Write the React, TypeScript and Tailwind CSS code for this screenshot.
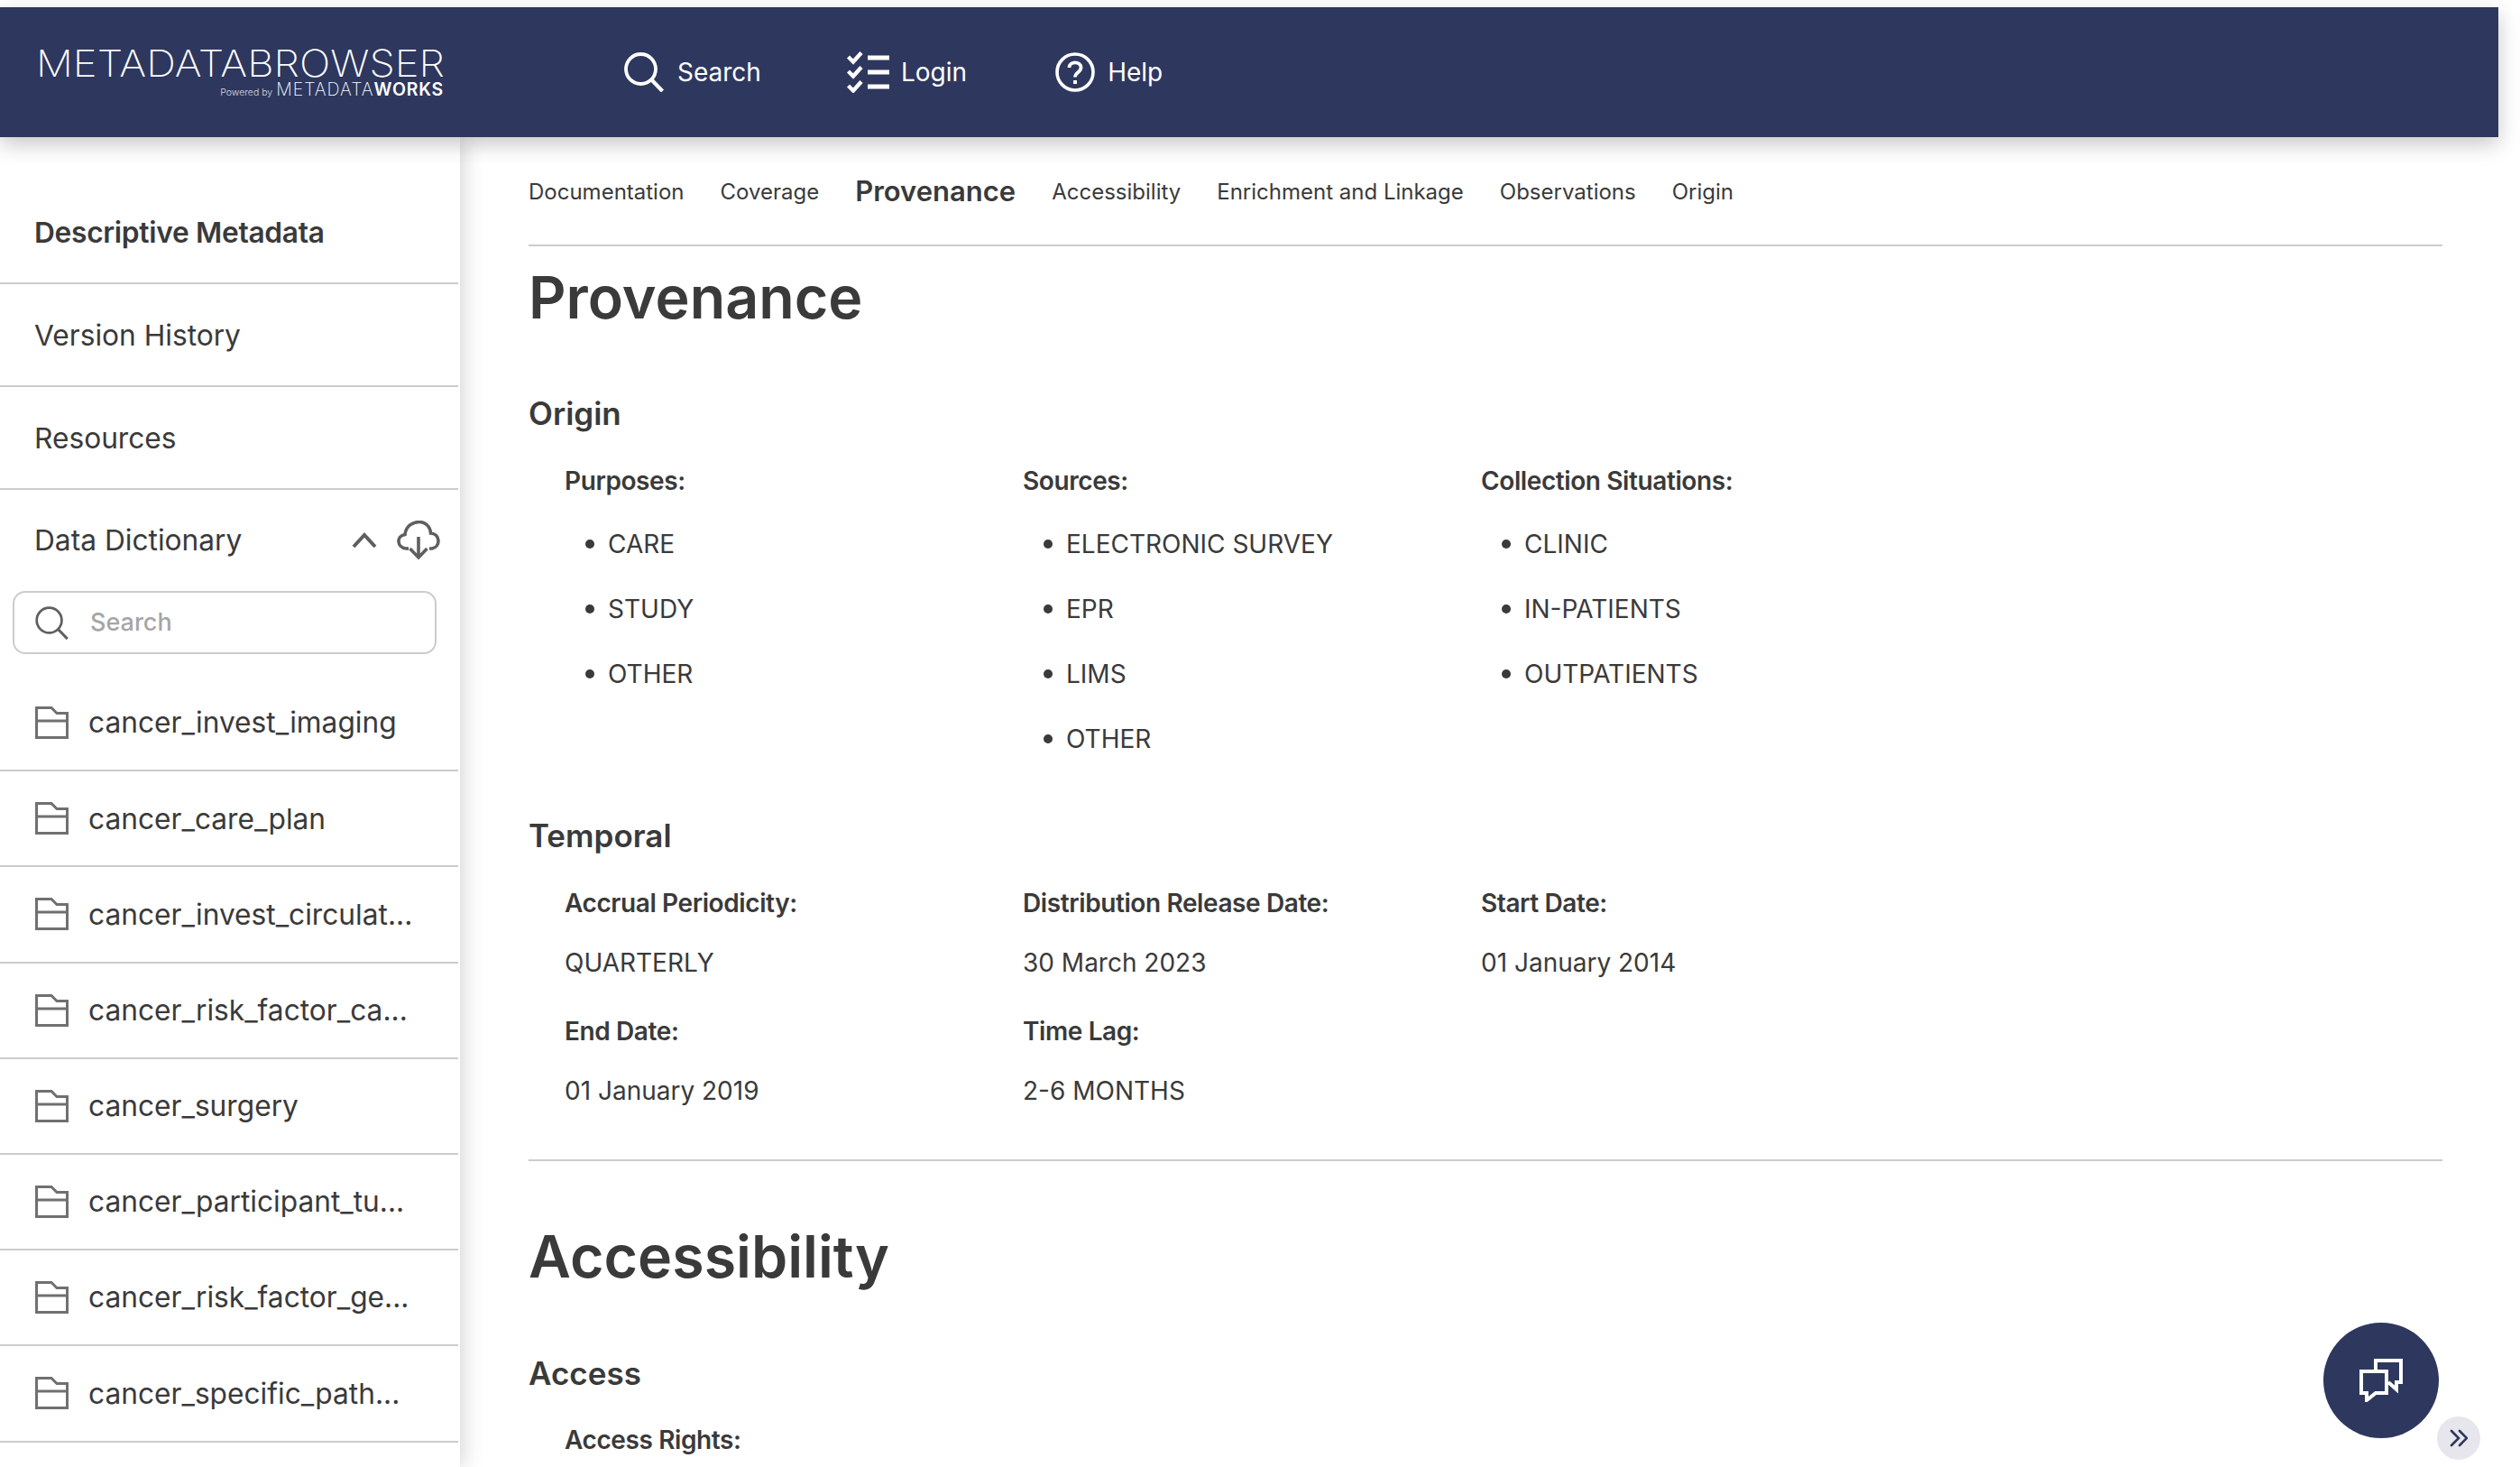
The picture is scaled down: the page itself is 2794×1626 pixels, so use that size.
import React from "react";

const FONT = "font-['Inter','Liberation_Sans',sans-serif]";

function SearchIcon({ className, sw }: { className: string; sw: number }) {
  return (
    <svg viewBox="0 0 44 44" fill="none" stroke="currentColor" strokeWidth={sw} className={className}>
      <circle cx="18.5" cy="18.5" r="16.5" />
      <path d="M30 30 L42.5 43" strokeWidth={sw + 0.4} />
    </svg>
  );
}

function ChecklistIcon() {
  return (
    <svg viewBox="0 0 47 46" fill="none" stroke="white" strokeWidth="4.4" className="w-[47px] h-[46px]">
      <path d="M1.5 6 L7 11.5 L16 1.5" />
      <path d="M1.5 22 L7 27.5 L16 17.5" />
      <path d="M1.5 38 L7 43.5 L16 33.5" />
      <path d="M23 7 H47 M23 23 H47 M23 39 H47" strokeWidth="5" />
    </svg>
  );
}

function HelpIcon() {
  return (
    <svg viewBox="0 0 44 44" fill="none" stroke="white" strokeWidth="3.6" className="w-[44px] h-[44px]">
      <circle cx="22" cy="22" r="20" />
      <path d="M15.5 17 C15.5 9.5 28.5 9.5 28.5 17 C28.5 22 22 22 22 27.5" strokeWidth="3.8" />
      <path d="M22 31 V35" strokeWidth="4" />
    </svg>
  );
}

function FolderIcon() {
  return (
    <svg viewBox="0 0 37 36" fill="none" stroke="#707070" strokeWidth="3" className="w-[37px] h-[36px] shrink-0">
      <path d="M1.5 34.5 V1.5 H18 L24 7.5 H35.5 V34.5 Z" />
      <path d="M1.5 16 H35.5" />
    </svg>
  );
}

function CloudIcon() {
  return (
    <svg viewBox="0 0 48 44" fill="none" stroke="#5f5f5f" strokeWidth="3.6" className="w-[48px] h-[44px]">
      <path d="M10 31 C0 30 -1 17 9 15.5 C10 5 19 1.5 25 1.5 C31 1.5 37 6 37.5 14 C48 14.5 49 29 39 31 H36" />
      <path d="M10 31 H13" />
      <path d="M24 18 V40 M14.5 31 L24 41 L33.5 31" />
    </svg>
  );
}

function ChevronIcon() {
  return (
    <svg viewBox="0 0 28 18" fill="none" stroke="#5f5f5f" strokeWidth="4" className="w-[28px] h-[18px]">
      <path d="M2 16 L14 3 L26 16" />
    </svg>
  );
}

function ChatIcon() {
  return (
    <svg viewBox="0 0 48 48" fill="none" stroke="white" strokeWidth="4" className="w-[48px] h-[48px]">
      <path d="M18 12 V2 H46 V26 H41 V34 L32 26" />
      <path d="M2 14 H30 V38 H18 L8 46 V38 H2 Z" />
    </svg>
  );
}

function DoubleChevron() {
  return (
    <svg viewBox="0 0 20 20" fill="none" stroke="#2e375e" strokeWidth="2.6" strokeLinecap="round" className="w-[20px] h-[20px]">
      <path d="M2 2 L10 10 L2 18 M11 2 L19 10 L11 18" />
    </svg>
  );
}

const tabs = ["Documentation", "Coverage", "Provenance", "Accessibility", "Enrichment and Linkage", "Observations", "Origin"];
const folders = [
  "cancer_invest_imaging",
  "cancer_care_plan",
  "cancer_invest_circulat...",
  "cancer_risk_factor_ca...",
  "cancer_surgery",
  "cancer_participant_tu...",
  "cancer_risk_factor_ge...",
  "cancer_specific_path...",
];

function ListCol({ title, items }: { title: string; items: string[] }) {
  return (
    <div className="w-[508px]">
      <div className="text-[28px] leading-[40px] tracking-[-0.4px] font-semibold text-[#3a3a3a]">{title}</div>
      <ul className="mt-[14px]">
        {items.map((i) => (
          <li key={i} className="h-[72px] flex items-center text-[28px] text-[#3a3a3a]">
            <span className="w-[10px] h-[10px] rounded-full bg-[#3a3a3a] ml-[23px] mr-[15px]" />
            {i}
          </li>
        ))}
      </ul>
    </div>
  );
}

function Field({ title, value }: { title: string; value: string }) {
  return (
    <div className="w-[508px] h-[142px]">
      <div className="text-[28px] leading-[40px] tracking-[-0.4px] font-semibold text-[#3a3a3a]">{title}</div>
      <div className="mt-[26px] text-[28px] leading-[40px] text-[#3a3a3a]">{value}</div>
    </div>
  );
}

export default function App() {
  return (
    <div className={`${FONT} w-[2794px] h-[1626px] overflow-hidden bg-white pt-2 relative`}>
      <header className="relative z-20 w-[2770px] h-[144px] bg-[#2e375e] shadow-[0_8px_22px_rgba(0,0,0,0.22)] flex items-start text-white">
        <div className="w-[692px] pl-[40px] pt-[46px] shrink-0">
          <div className="w-[412px] origin-left scale-x-[1.097] text-[41.5px] leading-[32px] font-extralight whitespace-nowrap">METADATABROWSER</div>
          <div className="w-[452px] mt-[3px] flex items-baseline justify-end whitespace-nowrap leading-[20px]">
            <span className="text-[10.5px] font-light mr-[4px] opacity-80">Powered by</span>
            <span className="text-[19.5px] font-extralight tracking-[1px]">METADATA</span>
            <span className="text-[19.5px] font-semibold tracking-[0.8px]">WORKS</span>
          </div>
        </div>
        <nav className="flex items-center h-[144px] text-[28px]">
          <SearchIcon className="w-[44px] h-[44px]" sw={3.8} />
          <span className="ml-[15px] w-[98px]">Search</span>
          <span className="ml-[90px]"><ChecklistIcon /></span>
          <span className="ml-[13px]">Login</span>
          <span className="ml-[98px]"><HelpIcon /></span>
          <span className="ml-[14px]">Help</span>
        </nav>
      </header>

      <div className="flex h-[1474px]">
        <aside className="relative z-10 w-[510px] shrink-0 bg-white shadow-[4px_0_22px_rgba(0,0,0,0.16)] text-[#3a3a3a] text-[31.7px]">
          <div className="w-[508px]">
            <div className="h-[163px] pt-[78px] pl-[38px] border-b-2 border-[#cccccc] font-semibold tracking-[-0.3px] leading-[56px]">Descriptive Metadata</div>
            <div className="h-[114px] flex items-center pl-[38px] pt-[1px] border-b-2 border-[#cccccc]">Version History</div>
            <div className="h-[114px] flex items-center pl-[38px] pt-[1px] border-b-2 border-[#cccccc]">Resources</div>
            <div className="h-[112px] flex items-center pl-[38px] pr-[20px]">
              <span className="flex-1">Data Dictionary</span>
              <span className="mr-[22px]"><ChevronIcon /></span>
              <span><CloudIcon /></span>
            </div>
            <div className="ml-[14px] w-[470px] h-[70px] border-2 border-[#cccccc] rounded-[14px] flex items-center pl-[23px] text-[#5f5f5f]">
              <SearchIcon className="w-[37px] h-[37px]" sw={3.2} />
              <span className="ml-[24px] text-[27px] font-medium text-[#a6a6a6]">Search</span>
            </div>
            <div className="h-[24px]" />
            {folders.map((f) => (
              <div key={f} className="h-[106.2px] flex items-center pl-[39px] gap-[22px] border-b-2 border-[#cccccc] text-[#3a3a3a] whitespace-nowrap">
                <FolderIcon />
                <span>{f}</span>
              </div>
            ))}
          </div>
        </aside>

        <main className="flex-1 pl-[76px] w-[2198px] pr-[86px] text-[#3a3a3a]">
          <div className="h-[121px] border-b-2 border-[#cccccc] flex items-center pt-[2px] gap-[40px] text-[24px]">
            {tabs.map((t) =>
              t === "Provenance" ? (
                <span key={t} className="text-[31px] font-semibold">{t}</span>
              ) : (
                <span key={t}>{t}</span>
              ),
            )}
          </div>
          <h1 className="mt-[15px] text-[64.5px] leading-[84px] font-semibold">Provenance</h1>
          <h2 className="mt-[64px] text-[35px] leading-[44px] font-semibold">Origin</h2>
          <div className="flex pl-[40px] mt-[33px]">
            <ListCol title="Purposes:" items={["CARE", "STUDY", "OTHER"]} />
            <ListCol title="Sources:" items={["ELECTRONIC SURVEY", "EPR", "LIMS", "OTHER"]} />
            <ListCol title="Collection Situations:" items={["CLINIC", "IN-PATIENTS", "OUTPATIENTS"]} />
          </div>
          <h2 className="mt-[49px] text-[35px] leading-[44px] font-semibold">Temporal</h2>
          <div className="flex flex-wrap pl-[40px] w-[1564px] mt-[33px]">
            <Field title="Accrual Periodicity:" value="QUARTERLY" />
            <Field title="Distribution Release Date:" value="30 March 2023" />
            <Field title="Start Date:" value="01 January 2014" />
            <Field title="End Date:" value="01 January 2019" />
            <Field title="Time Lag:" value="2-6 MONTHS" />
          </div>
          <div className="border-b-2 border-[#cccccc] mt-[20px]" />
          <h1 className="mt-[64px] text-[64.5px] leading-[84px] font-semibold">Accessibility</h1>
          <h2 className="mt-[65px] text-[35px] leading-[44px] font-semibold">Access</h2>
          <div className="pl-[40px] mt-[32px] text-[28px] leading-[40px] tracking-[-0.4px] font-semibold">Access Rights:</div>
        </main>
      </div>

      <button className="absolute z-30 left-[2576px] top-[1466px] w-[128px] h-[128px] rounded-full bg-[#2e375e] flex items-center justify-center">
        <ChatIcon />
      </button>
      <button className="absolute z-30 left-[2702px] top-[1570px] w-[48px] h-[48px] rounded-full bg-[#e6e6ec] flex items-center justify-center">
        <DoubleChevron />
      </button>
    </div>
  );
}
